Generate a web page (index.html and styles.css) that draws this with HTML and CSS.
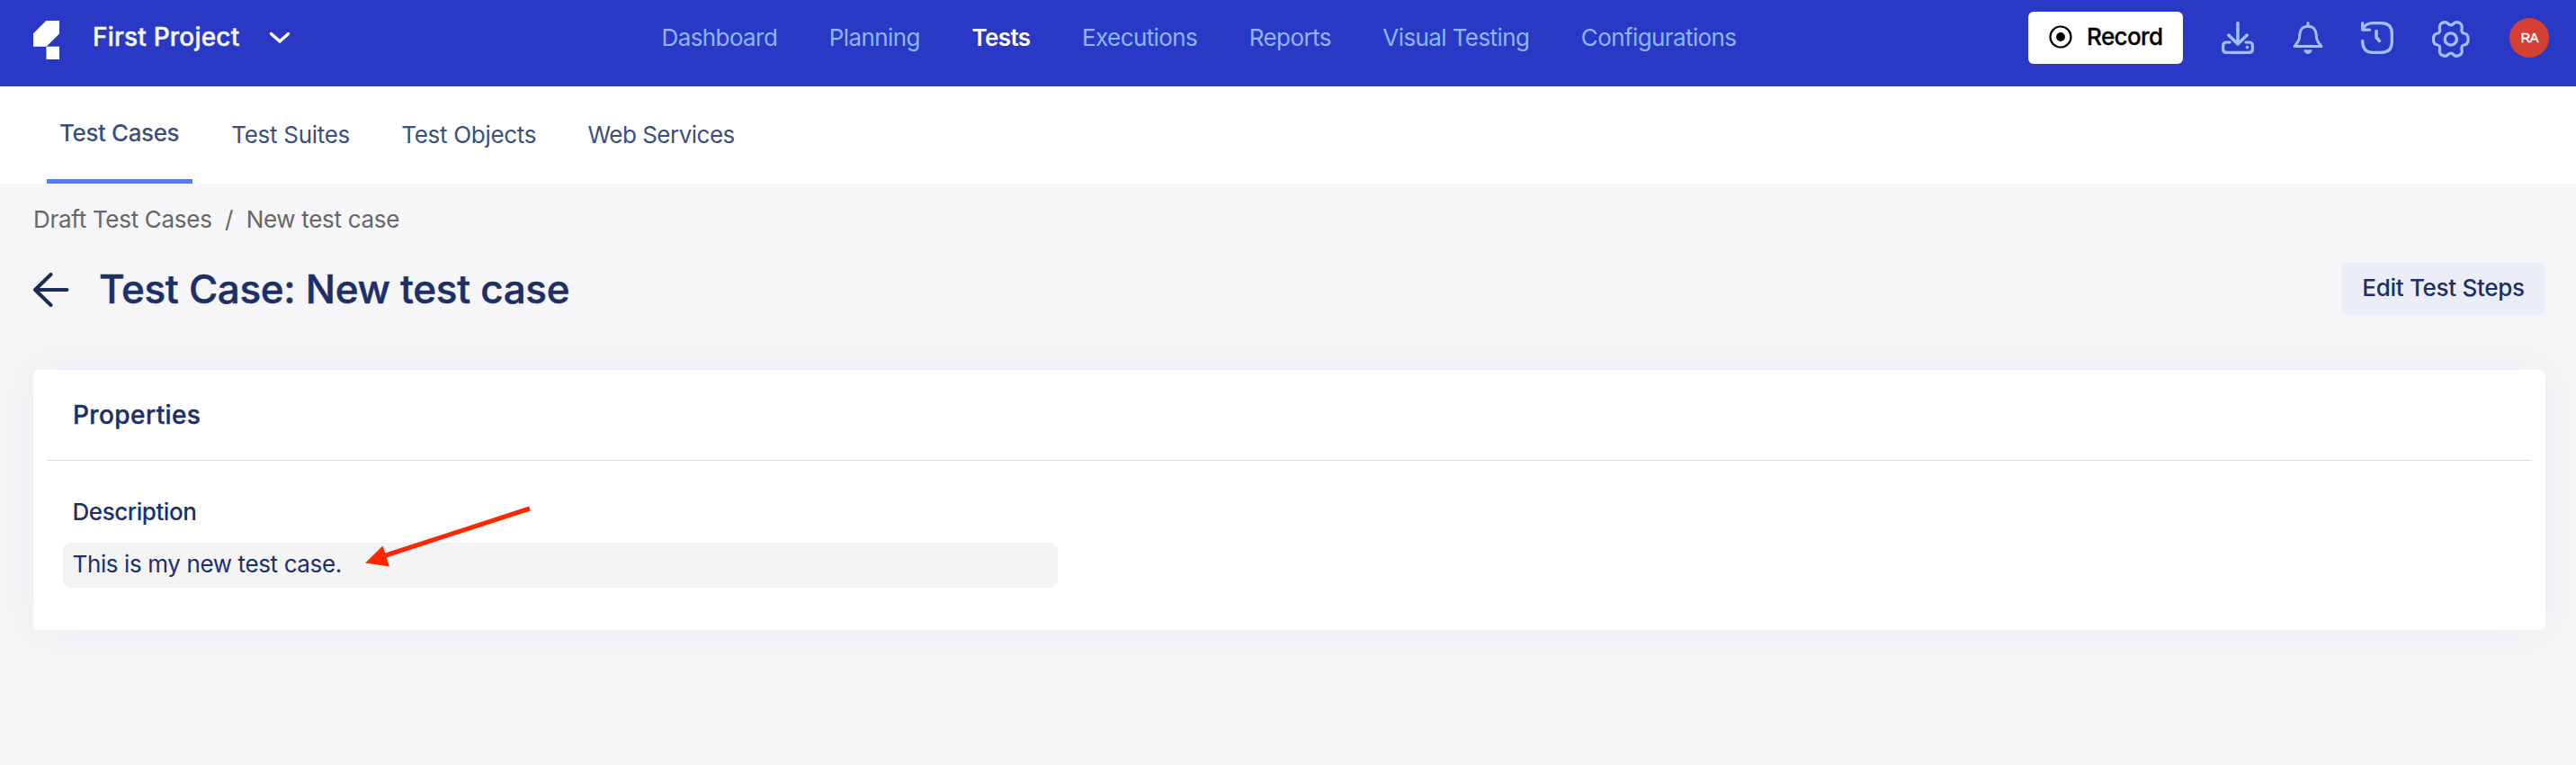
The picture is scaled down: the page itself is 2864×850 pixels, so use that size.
FILE: index.html
```html
<!DOCTYPE html>
<html lang="en">
<head>
<meta charset="utf-8">
<title>Test Case: New test case</title>
<link rel="stylesheet" href="styles.css">
</head>
<body>
<header class="topbar">
  <svg class="logo" width="29" height="43" viewBox="0 0 29 43"><path d="M14.3 0H29V14.5L14.5 28.700H0V14.300Z" fill="#fff"/><path d="M14.500 28.700H29V43H14.500Z" fill="#fff"/></svg>
  <div class="project">First Project</div>
  <svg class="chevron" width="24" height="14" viewBox="0 0 24 14"><path d="M2.500 2.500L12 11L21.500 2.500" fill="none" stroke="#fff" stroke-width="3.400" stroke-linecap="round" stroke-linejoin="round"/></svg>
  <nav class="nav">
    <a class="nav-link">Dashboard</a>
    <a class="nav-link">Planning</a>
    <a class="nav-link active">Tests</a>
    <a class="nav-link">Executions</a>
    <a class="nav-link">Reports</a>
    <a class="nav-link">Visual Testing</a>
    <a class="nav-link">Configurations</a>
  </nav>
  <div class="tools">
    <button class="record">
      <svg width="26" height="26" viewBox="0 0 26 26"><circle cx="13" cy="13" r="11.500" fill="none" stroke="#000" stroke-width="2.200"/><circle cx="13" cy="13" r="4.900" fill="#000"/></svg>
      <span>Record</span>
    </button>
    <svg class="icon download" width="36" height="36" viewBox="0 0 36 36"><path d="M18 1.700V25M7.800 15L18 25L28.200 15" stroke-width="3.500"/><path d="M9 23H5.500Q1.600 23 1.600 27V30.500Q1.600 34.400 5.500 34.400H30.500Q34.400 34.400 34.400 30.500V27Q34.400 23 30.500 23H27" stroke-width="3.200"/><circle class="solid" cx="28.500" cy="28.600" r="1.800"/></svg>
    <svg class="icon bell" width="34" height="36" viewBox="0 0 34 36"><path d="M17 1.500V5M17 5.200C11.500 5.200 8 9 7.800 14.500C7.600 20.500 6.500 22 2 27.600H32C27.500 22 26.400 20.500 26.200 14.500C26 9 22.500 5.200 17 5.200Z" stroke-width="3"/><path class="solid" d="M12.500 31.300H21.500C21.500 34 19.800 36 17 36S12.500 34 12.500 31.300Z"/></svg>
    <svg class="icon history" width="36" height="36" viewBox="0 0 36 36"><path d="M1.700 21.500C1.700 30 5 34.300 13 34.300H22.500C30.500 34.300 34.300 30.500 34.300 22.500V13.500C34.300 5.500 30.500 1.700 22.500 1.700H13C8.500 1.700 5 3 2.500 7.500" stroke-width="3.300"/><path d="M1.700 1.700V9.200H9.500" stroke-width="3.300"/><path d="M17 10.500V17.500L20.500 21.500" stroke-width="3.500"/></svg>
    <svg class="icon gear" width="42" height="41" viewBox="0 0 42 41"><circle cx="20.800" cy="20.500" r="6.600" stroke-width="3.400"/><path d="M20.800 4.800C23.800 4.800 24 1.700 27 1.700C31 2 33 4 33.200 6.800C33.400 9.500 32.200 10.500 33.500 12.700C34.700 14.700 37 13.800 38.700 15.500C40.700 18 40.700 23 38.700 25.500C37 27.200 34.700 26.300 33.500 28.300C32.200 30.500 33.400 31.500 33.200 34.200C33 37 31 39 27 39.300C24 39.300 23.800 36.200 20.800 36.200S17.600 39.300 14.600 39.300C10.600 39 8.600 37 8.400 34.200C8.200 31.500 9.400 30.500 8.100 28.300C6.900 26.300 4.600 27.200 2.900 25.500C0.900 23 0.900 18 2.900 15.500C4.600 13.800 6.900 14.700 8.100 12.700C9.400 10.500 8.200 9.500 8.400 6.800C8.600 4 10.600 2 14.600 1.700C17.600 1.700 17.800 4.800 20.800 4.800Z" stroke-width="3.200"/></svg>
    <div class="avatar">RA</div>
  </div>
</header>
<div class="tabs">
  <a class="tab selected">Test Cases</a>
  <a class="tab">Test Suites</a>
  <a class="tab">Test Objects</a>
  <a class="tab">Web Services</a>
</div>
<main class="page">
  <div class="crumbs"><span>Draft Test Cases</span><span>/</span><span>New test case</span></div>
  <div class="title-row">
    <svg class="back" width="40" height="38" viewBox="0 0 40 38"><path d="M37.500 19H2M19.500 2L2 19L19.500 36" fill="none" stroke="#1b2d55" stroke-width="4" stroke-linecap="round" stroke-linejoin="round"/></svg>
    <h1 class="title">Test Case: New test case</h1>
    <button class="edit">Edit Test Steps</button>
  </div>
  <section class="card">
    <h2 class="card-title">Properties</h2>
    <div class="card-body">
      <div class="label">Description</div>
      <div class="field"><span>This is my new test case.</span>
        <svg class="arrow" width="186" height="70" viewBox="0 0 186 70"><path d="M183 5L20 58" stroke="#ff2600" stroke-width="5" fill="none"/><path d="M0 65.500L19.500 46.500L27 69.500Z" fill="#ff2600"/></svg>
      </div>
    </div>
  </section>
</main>
</body>
</html>
```
FILE: styles.css
```css
* { box-sizing: border-box; }
body { margin: 0; height: 850px; overflow: hidden; background: #f6f6f9; font-family: Inter, sans-serif; font-size: 26px; line-height: 32px; color: #1c3067; }
button { border: 0; padding: 0; font: inherit; }
svg { display: block; flex: none; }
.topbar { height: 96px; background: #2939c6; display: flex; align-items: center; padding: 0 30px 12px 37px; white-space: nowrap; }
.logo { margin-top: 5px; }
.project { width: 196px; margin-left: 37px; padding-bottom: 2px; font-size: 28px; font-weight: 500; letter-spacing: 0.2px; -webkit-text-stroke: 0.4px; color: #f6f7fa; }
.nav { display: flex; gap: 57.6px; margin-left: 412.5px; letter-spacing: -0.6px; color: #8db6fb; }
.active { color: #fff; font-weight: 600; }
.tools { display: flex; align-items: center; margin-left: auto; }
.record { width: 172px; height: 58px; border-radius: 6px; background: #fff; color: #000; display: flex; align-items: center; padding: 0 0 2px 23px; gap: 16px; font-weight: 500; letter-spacing: -0.6px; -webkit-text-stroke: 0.3px; }
.icon { fill: none; stroke: #9cc2ff; stroke-linecap: round; stroke-linejoin: round; }
.icon .solid { fill: #9cc2ff; stroke: none; }
.download { margin-left: 43px; }
.bell { margin-left: 43px; }
.history { margin-left: 42px; }
.gear { margin-left: 43px; margin-top: 2px; }
.avatar { width: 44px; height: 44px; border-radius: 50%; margin-left: 44px; background: #d63f33; color: #fff; font: 400 15px/43px "Liberation Sans", sans-serif; -webkit-text-stroke: 0.4px #fff; letter-spacing: -0.8px; text-align: center; }
.tabs { height: 108px; background: #fff; display: flex; padding-left: 52px; gap: 29.3px; color: #3c4f7c; letter-spacing: -0.3px; white-space: nowrap; }
.tab { height: 108px; padding: 38px 14px 0; }
.tab:last-child { letter-spacing: -0.5px; }
.selected { width: 162px; padding-top: 36px; border-bottom: 5px solid #4f7dff; font-weight: 500; letter-spacing: -0.4px; }
.page { padding: 0 34px 0 37px; }
.crumbs { display: flex; gap: 14.5px; height: 32px; margin-top: 24px; color: #666; letter-spacing: -0.3px; white-space: nowrap; }
.title-row { display: flex; align-items: center; height: 58px; margin-top: 32px; }
.back { margin-top: 2px; }
.title { margin: 0 0 0 33px; font-size: 44px; line-height: 56px; font-weight: 500; letter-spacing: -0.33px; -webkit-text-stroke: 0.5px; white-space: nowrap; }
.edit { width: 227px; height: 58px; margin-left: auto; padding-bottom: 3px; border-radius: 6px; background: #ebeef6; color: #1c3067; font-weight: 500; letter-spacing: -0.3px; }
.card { height: 289px; margin-top: 61px; padding: 0 15px; border-radius: 6px; background: #fff; box-shadow: 0 0 44px rgba(30, 40, 70, 0.045); }
.card-title { height: 101px; margin: 0; padding: 33px 0 0 29px; border-bottom: 1px solid #d9dbe6; font-size: 28px; line-height: 34px; font-weight: 500; letter-spacing: 0.4px; -webkit-text-stroke: 0.4px; }
.card-body { padding: 41px 0 0 18px; }
.label { padding-left: 10.5px; font-weight: 500; letter-spacing: -0.45px; }
.field { position: relative; width: 1106px; height: 50px; margin-top: 18px; padding: 8px 0 0 10.5px; border-radius: 8px; background: #f4f4f4; letter-spacing: -0.38px; white-space: nowrap; }
.arrow { position: absolute; left: 336px; top: -43px; }
```
